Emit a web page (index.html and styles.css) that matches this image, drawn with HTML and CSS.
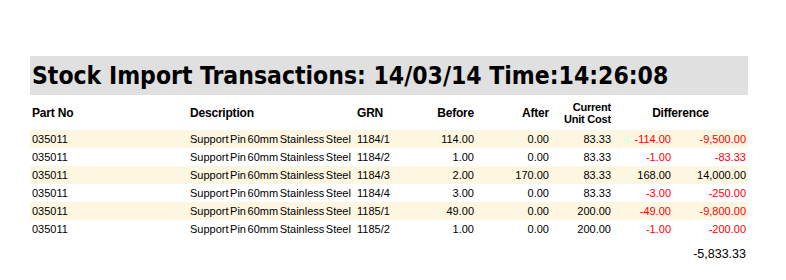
FILE: index.html
```html
<!DOCTYPE html>
<html>
<head>
<meta charset="utf-8">
<link rel="stylesheet" href="styles.css">
</head>
<body>
<div class="report">
  <div class="title">Stock Import Transactions: 14/03/14 Time:14:26:08</div>
  <div class="grid head">
    <div class="c l">Part No</div>
    <div class="c l">Description</div>
    <div class="c l">GRN</div>
    <div class="c r">Before</div>
    <div class="c r">After</div>
    <div class="c r two">Current<br>Unit Cost</div>
    <div class="c ctr span2">Difference</div>
  </div>
  <div class="grid row alt">
    <div class="c l">035011</div><div class="c l desc">Support Pin 60mm Stainless Steel</div><div class="c l">1184/1</div>
    <div class="c r">114.00</div><div class="c r">0.00</div><div class="c r">83.33</div><div class="c r neg">-114.00</div><div class="c r neg">-9,500.00</div>
  </div>
  <div class="grid row">
    <div class="c l">035011</div><div class="c l desc">Support Pin 60mm Stainless Steel</div><div class="c l">1184/2</div>
    <div class="c r">1.00</div><div class="c r">0.00</div><div class="c r">83.33</div><div class="c r neg">-1.00</div><div class="c r neg">-83.33</div>
  </div>
  <div class="grid row alt">
    <div class="c l">035011</div><div class="c l desc">Support Pin 60mm Stainless Steel</div><div class="c l">1184/3</div>
    <div class="c r">2.00</div><div class="c r">170.00</div><div class="c r">83.33</div><div class="c r">168.00</div><div class="c r">14,000.00</div>
  </div>
  <div class="grid row">
    <div class="c l">035011</div><div class="c l desc">Support Pin 60mm Stainless Steel</div><div class="c l">1184/4</div>
    <div class="c r">3.00</div><div class="c r">0.00</div><div class="c r">83.33</div><div class="c r neg">-3.00</div><div class="c r neg">-250.00</div>
  </div>
  <div class="grid row alt">
    <div class="c l">035011</div><div class="c l desc">Support Pin 60mm Stainless Steel</div><div class="c l">1185/1</div>
    <div class="c r">49.00</div><div class="c r">0.00</div><div class="c r">200.00</div><div class="c r neg">-49.00</div><div class="c r neg">-9,800.00</div>
  </div>
  <div class="grid row">
    <div class="c l">035011</div><div class="c l desc">Support Pin 60mm Stainless Steel</div><div class="c l">1185/2</div>
    <div class="c r">1.00</div><div class="c r">0.00</div><div class="c r">200.00</div><div class="c r neg">-1.00</div><div class="c r neg">-200.00</div>
  </div>
  <div class="total">-5,833.33</div>
</div>
</body>
</html>
```
FILE: styles.css
```css
html, body {
  margin: 0;
  padding: 0;
  background: #ffffff;
}
body {
  font-family: "Liberation Sans", Arial, sans-serif;
  color: #000000;
}
.report {
  width: 718px;
  margin-left: 30px;
  padding-top: 56px;
}
.title {
  height: 39px;
  background: #e0e0e0;
  font-family: "DejaVu Sans Condensed", "DejaVu Sans", sans-serif;
  font-stretch: condensed;
  font-weight: bold;
  font-size: 24.5px;
  line-height: 39px;
  padding-left: 2px;
  white-space: nowrap;
  overflow: hidden;
}
.grid {
  display: grid;
  grid-template-columns: 158px 167px 65px 56px 75px 62px 60px 75px;
}
.head {
  height: 35px;
  align-items: center;
  font-weight: bold;
  font-size: 12px;
  letter-spacing: -0.2px;
}
.head .two {
  font-size: 11px;
  line-height: 12px;
}
.row {
  height: 18px;
  line-height: 18px;
  font-size: 11px;
  align-items: center;
}
.row.alt {
  background: #fdf6e0;
}
.c {
  white-space: nowrap;
  overflow: hidden;
}
.l {
  text-align: left;
  padding-left: 2px;
}
.r {
  text-align: right;
  padding-right: 2px;
}
.ctr {
  text-align: center;
}
.span2 {
  grid-column: span 2;
}
.desc {
  word-spacing: -1.5px;
  text-overflow: clip;
}
.neg {
  color: #ff0000;
}
.total {
  text-align: right;
  padding-right: 2px;
  margin-top: 9px;
  font-size: 12.5px;
  line-height: 15px;
}
```
